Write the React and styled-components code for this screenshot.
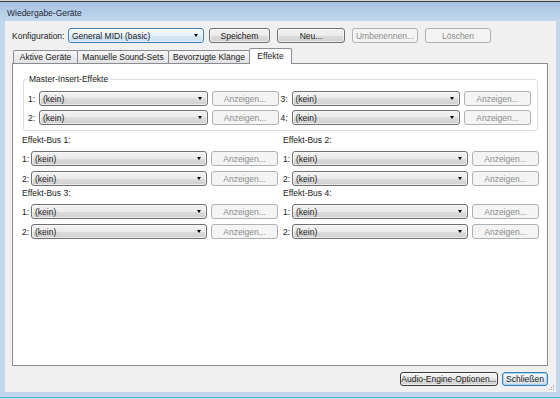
import React from 'react';
import styled, { createGlobalStyle } from 'styled-components';

const GlobalStyle = createGlobalStyle`
  *, *::before, *::after { box-sizing: border-box; }
  html, body { margin: 0; padding: 0; background: #3a3a3a; }
  body {
    font-family: "Liberation Sans", Arial, sans-serif;
    font-size: 8.5px;
    color: #1a1a1a;
  }
`;

const Screen = styled.div`
  width: 560px;
  height: 399px;
  display: flex;
  flex-direction: column;
  overflow: hidden;
`;

const TopStrip = styled.div`
  flex: none;
  height: 2px;
  background: #d6d6d6;
  border-bottom: 1px solid #3c3c3c;
`;

const BottomStrip = styled.div`
  flex: none;
  height: 2px;
  background: #dcdcdc;
  border-top: 1px solid #45b3c6;
`;

const Window = styled.div`
  flex: none;
  height: 395px;
  display: flex;
  flex-direction: column;
  background: #c2d6ec;
`;

const TitleBar = styled.div`
  flex: none;
  height: 19px;
  display: flex;
  align-items: center;
  padding-left: 7px;
  padding-top: 2px;
  background: linear-gradient(#a6c2e3, #c3d7ed);
  color: #1e2a36;
  font-size: 8.5px;
`;

const Frame = styled.div`
  flex: 1;
  display: flex;
  padding: 0 4px 5px 5px;
  min-height: 0;
`;

const Client = styled.div`
  position: relative;
  flex: 1;
  display: flex;
  flex-direction: column;
  background: #f0f0f0;
  padding: 7px 8px 6px 7px;
`;

const ConfigRow = styled.div`
  display: flex;
  align-items: center;
  height: 15px;
`;

const ConfigLabel = styled.span`
  width: 56px;
  flex: none;
`;

const Combo = styled.div`
  flex: ${(p) => (p.$width ? 'none' : '1')};
  width: ${(p) => (p.$width ? `${p.$width}px` : 'auto')};
  min-width: 0;
  height: 15px;
  display: flex;
  align-items: center;
  justify-content: space-between;
  padding: 0 5px 0 3px;
  border: 1px solid ${(p) => (p.$hot ? '#3c7fb1' : '#707070')};
  border-radius: 3px;
  background: ${(p) =>
    p.$hot
      ? 'linear-gradient(#f3f9fd 0%, #e8f2fa 50%, #d6e7f4 50%, #c9def0 100%)'
      : 'linear-gradient(#f2f2f2 0%, #ebebeb 50%, #dddddd 50%, #cfcfcf 100%)'};
  box-shadow: inset 0 0 0 1px rgba(255, 255, 255, 0.6);
  white-space: nowrap;
`;

const Arrow = styled.span`
  flex: none;
  width: 0;
  height: 0;
  border-left: 2.5px solid transparent;
  border-right: 2.5px solid transparent;
  border-top: 3px solid #000;
`;

const Button = styled.div`
  flex: none;
  width: ${(p) => p.$width}px;
  height: ${(p) => p.$height || 15}px;
  margin-left: ${(p) => p.$gap || 0}px;
  display: flex;
  align-items: center;
  justify-content: center;
  border-radius: 3px;
  white-space: nowrap;
  border: 1px solid
    ${(p) =>
      p.$disabled ? '#adb2b5' : p.$default ? '#3c7fb1' : p.$focus ? '#3a3a3a' : '#707070'};
  color: ${(p) => (p.$disabled ? '#8a8a8a' : '#1a1a1a')};
  background: ${(p) =>
    p.$disabled
      ? '#f4f4f4'
      : p.$default
      ? 'linear-gradient(#f4f8fb 0%, #ebf1f6 50%, #dfe7ee 50%, #d3dde6 100%)'
      : 'linear-gradient(#f2f2f2 0%, #ebebeb 50%, #dddddd 50%, #cfcfcf 100%)'};
  box-shadow: ${(p) =>
    p.$disabled
      ? 'none'
      : p.$default
      ? 'inset 0 0 0 1px #a9d7f3'
      : 'inset 0 0 0 1px rgba(255,255,255,0.6)'};
`;

const TabStrip = styled.div`
  display: flex;
  align-items: flex-start;
  height: 15px;
  margin-top: 5px;
  padding-left: 1px;
`;

const Tab = styled.div`
  flex: none;
  position: relative;
  width: ${(p) => p.$width}px;
  height: ${(p) => (p.$active ? 16 : 13)}px;
  margin-top: ${(p) => (p.$active ? 0 : 2)}px;
  margin-left: ${(p) => (p.$first ? 0 : -1)}px;
  z-index: ${(p) => (p.$active ? 1 : 0)};
  display: flex;
  align-items: center;
  justify-content: center;
  padding-bottom: ${(p) => (p.$active ? 2 : 0)}px;
  border: 1px solid #898c95;
  border-bottom: none;
  border-radius: 2px 2px 0 0;
  background: ${(p) =>
    p.$active ? '#ffffff' : 'linear-gradient(#f7f7f7 0%, #ececec 50%, #e3e3e3 100%)'};
  white-space: nowrap;
`;

const Panel = styled.div`
  flex: 1;
  display: flex;
  flex-direction: column;
  background: #fff;
  border: 1px solid #898c95;
  padding: 9px 9px 0 10px;
`;

const GroupBox = styled.fieldset`
  margin: 0;
  min-width: 0;
  padding: 6px 6px 5px 4px;
  border: 1px solid #d5dfe5;
  border-radius: 3px;
`;

const Legend = styled.legend`
  margin-left: -1px;
  padding: 0 2px;
  line-height: 12px;
  font-size: 8.5px;
`;

const MasterGrid = styled.div`
  display: grid;
  grid-template-columns: 1fr 1fr;
  column-gap: 2px;
  row-gap: 4px;
`;

const SlotRow = styled.div`
  display: flex;
  align-items: center;
  height: 15px;
  min-width: 0;
`;

const SlotLabel = styled.span`
  flex: none;
  width: ${(p) => p.$width}px;
`;

const BusGrid = styled.div`
  display: grid;
  grid-template-columns: 256px 256px;
  column-gap: 5px;
  row-gap: 1px;
  margin: 3px -1px 0;
`;

const BusSection = styled.div`
  display: flex;
  flex-direction: column;
  gap: 5px;
`;

const BusTitle = styled.div`
  height: 13px;
  line-height: 13px;
  margin-bottom: -1px;
`;

const Footer = styled.div`
  display: flex;
  justify-content: flex-end;
  margin-top: 6px;
  height: 14px;
`;

const Grip = styled.svg`
  position: absolute;
  right: 1px;
  bottom: 1px;
`;

function Slot({ n, labelWidth }) {
  return (
    <SlotRow>
      <SlotLabel $width={labelWidth}>{n}:</SlotLabel>
      <Combo>
        <span>(kein)</span>
        <Arrow />
      </Combo>
      <Button $width={67} $gap={4} $disabled>
        Anzeigen...
      </Button>
    </SlotRow>
  );
}

function Bus({ title }) {
  return (
    <BusSection>
      <BusTitle>{title}</BusTitle>
      <Slot n={1} labelWidth={9} />
      <Slot n={2} labelWidth={9} />
    </BusSection>
  );
}

export default function App() {
  return (
    <>
      <GlobalStyle />
      <Screen>
        <TopStrip />
        <Window>
          <TitleBar>Wiedergabe-Geräte</TitleBar>
          <Frame>
            <Client>
              <ConfigRow>
                <ConfigLabel>Konfiguration:</ConfigLabel>
                <Combo $width={136} $hot>
                  <span>General MIDI (basic)</span>
                  <Arrow />
                </Combo>
                <Button $width={61} $gap={5}>Speichem</Button>
                <Button $width={68} $gap={7}>Neu...</Button>
                <Button $width={66} $gap={7} $disabled>Umbenennen...</Button>
                <Button $width={66} $gap={7} $disabled>Löschen</Button>
              </ConfigRow>

              <TabStrip>
                <Tab $first $width={65}>Aktive Geräte</Tab>
                <Tab $width={92}>Manuelle Sound-Sets</Tab>
                <Tab $width={82}>Bevorzugte Klänge</Tab>
                <Tab $width={43} $active>Effekte</Tab>
              </TabStrip>

              <Panel>
                <GroupBox>
                  <Legend>Master-Insert-Effekte</Legend>
                  <MasterGrid>
                    <Slot n={1} labelWidth={11} />
                    <Slot n={3} labelWidth={11} />
                    <Slot n={2} labelWidth={11} />
                    <Slot n={4} labelWidth={11} />
                  </MasterGrid>
                </GroupBox>
                <BusGrid>
                  <Bus title="Effekt-Bus 1:" />
                  <Bus title="Effekt-Bus 2:" />
                  <Bus title="Effekt-Bus 3:" />
                  <Bus title="Effekt-Bus 4:" />
                </BusGrid>
              </Panel>

              <Footer>
                <Button $width={98} $height={14} $focus>Audio-Engine-Optionen...</Button>
                <Button $width={46} $height={14} $gap={4} $default>Schließen</Button>
              </Footer>

              <Grip width="7" height="7" viewBox="0 0 7 7">
                <rect x="5" y="1" width="1" height="1" fill="#a0a8b0" />
                <rect x="3" y="3" width="1" height="1" fill="#a0a8b0" />
                <rect x="5" y="3" width="1" height="1" fill="#a0a8b0" />
                <rect x="1" y="5" width="1" height="1" fill="#a0a8b0" />
                <rect x="3" y="5" width="1" height="1" fill="#a0a8b0" />
                <rect x="5" y="5" width="1" height="1" fill="#a0a8b0" />
              </Grip>
            </Client>
          </Frame>
        </Window>
        <BottomStrip />
      </Screen>
    </>
  );
}
